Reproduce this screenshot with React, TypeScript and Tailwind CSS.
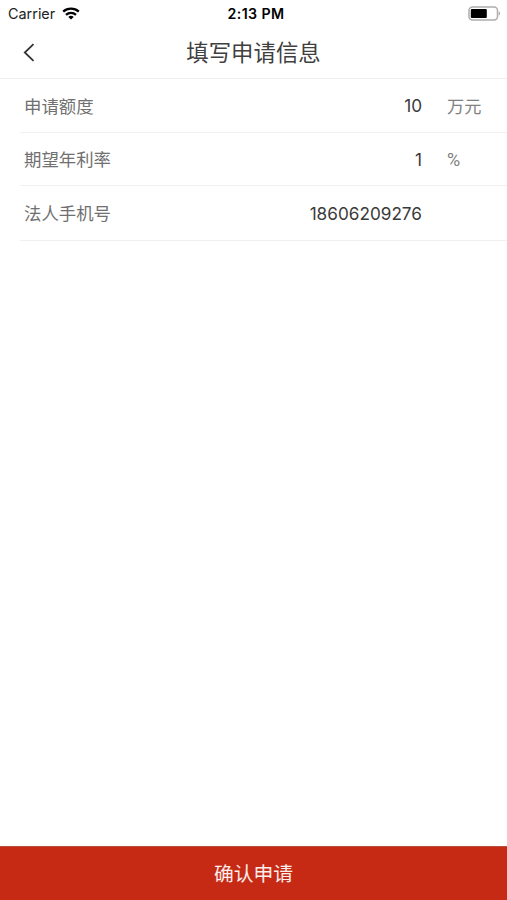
import React, { useState } from 'react';

const fields = [
    { key: 'amount', label: '申请额度', unit: '万元', height: 'h-[54px]', unitFont: 'text-[17.2px]' },
    { key: 'rate', label: '期望年利率', unit: '%', height: 'h-[53px]', unitFont: 'font-[Roboto,sans-serif] text-[18px]' },
    { key: 'phone', label: '法人手机号', unit: '', height: 'h-[55px]', unitFont: 'text-[17.2px]' },
];

function WifiIcon() {
    return (
        <svg width="18" height="13" viewBox="0 0 18 13" fill="none" stroke="#000" strokeWidth="2.3">
            <path d="M1.2 4.7C5.5 0.7 12.5 0.7 16.8 4.7" />
            <path d="M4 7.9C6.8 5.3 11.2 5.3 14 7.9" />
            <path d="M9 12.5L6.3 9.9C7.8 8.5 10.2 8.5 11.7 9.9Z" fill="#000" stroke="none" />
        </svg>
    );
}

function BatteryIcon() {
    return (
        <svg width="33" height="15" viewBox="0 0 33 15" fill="none">
            <rect x="1" y="1" width="28.5" height="13" rx="3.5" stroke="#adadad" strokeWidth="1.5" />
            <rect x="2.8" y="3" width="16" height="9" rx="1" fill="#000" />
            <path d="M30.8 5.3C32.3 5.9 32.3 9.1 30.8 9.7Z" fill="#999" />
        </svg>
    );
}

export default function App() {
    const [form, setForm] = useState<Record<string, string>>({
        amount: '10',
        rate: '1',
        phone: '18606209276',
    });

    return (
        <div className="flex h-screen w-full flex-col bg-white font-[Inter,'Noto_Sans_CJK_SC',sans-serif]">
            {/* 状态栏 */}
            <div className="grid h-[27px] shrink-0 grid-cols-3 items-center pl-[8px] pr-[6px] text-black">
                <div className="flex items-center gap-[7px]">
                    <span className="pt-[2px] text-[14.4px] leading-none text-[#222]">Carrier</span>
                    <WifiIcon />
                </div>
                <span className="pl-[3px] pt-[2px] text-center text-[14.2px] font-semibold leading-none tracking-[0.4px]">2:13 PM</span>
                <div className="flex justify-end">
                    <BatteryIcon />
                </div>
            </div>

            {/* 导航栏 */}
            <div className="grid h-[52px] shrink-0 grid-cols-[60px_1fr_60px] items-center border-b border-[#efefef]">
                <button className="pl-[23px]">
                    <svg width="12" height="20" viewBox="0 0 12 20" fill="none" stroke="#333" strokeWidth="1.8">
                        <path d="M10.5 1.2L1.8 9.5L10.5 17.8" />
                    </svg>
                </button>
                <h1 className="pt-[2px] text-center text-[22.4px] leading-none text-[#404040]">填写申请信息</h1>
            </div>

            {/* 表单 */}
            <div className="flex-1 pl-[20px]">
                {fields.map((field) => (
                    <div key={field.key} className={`flex items-center border-b border-[#f0f0f0] pl-[4px] pt-[2px] ${field.height}`}>
                        <label className="w-[120px] text-[17.4px] leading-none text-[#707070]">{field.label}</label>
                        <input
                            value={form[field.key]}
                            onChange={(e) => setForm({ ...form, [field.key]: e.target.value })}
                            className="min-w-0 flex-1 bg-transparent pb-px text-right text-[17.2px] text-[#3a3a3a] outline-none"
                        />
                        <span className={`ml-[25px] w-[60px] leading-none text-[#808080] ${field.unitFont}`}>{field.unit}</span>
                    </div>
                ))}
            </div>

            <button className="h-[54px] shrink-0 border-t border-[#b9503f] bg-[#c62a15] pt-[2px] text-[19.8px] leading-none text-[#fdeeec]">
                确认申请
            </button>
        </div>
    );
}
